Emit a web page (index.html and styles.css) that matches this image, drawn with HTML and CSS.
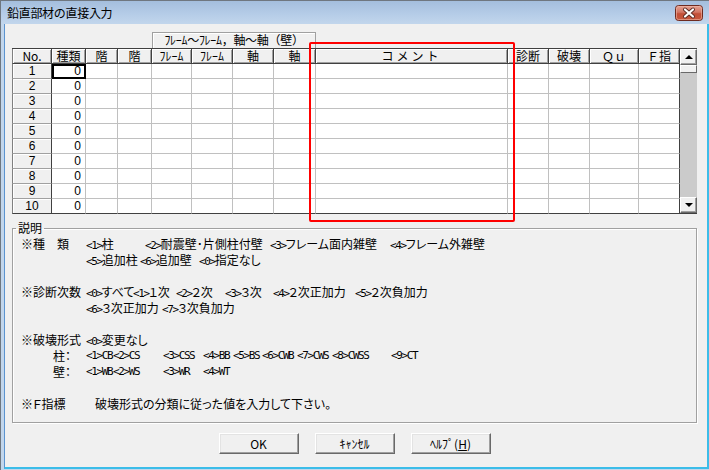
FILE: index.html
```html
<!DOCTYPE html>
<html lang="ja">
<head>
<meta charset="utf-8">
<title>鉛直部材の直接入力</title>
<link rel="stylesheet" href="styles.css">
</head>
<body>
<div class="window">
  <div class="titlebar">
    <span class="title">鉛直部材の直接入力</span>
    <span class="close">
      <svg width="28" height="16" viewBox="0 0 28 16">
        <defs>
          <linearGradient id="cg" x1="0" y1="0" x2="0" y2="1">
            <stop offset="0" stop-color="#e6a595"/>
            <stop offset="0.45" stop-color="#d27563"/>
            <stop offset="0.55" stop-color="#c24f37"/>
            <stop offset="1" stop-color="#c8583d"/>
          </linearGradient>
        </defs>
        <rect x="0.5" y="0.5" width="27" height="15" rx="3" fill="url(#cg)" stroke="#6e2b20"/>
        <rect x="1.5" y="1.5" width="25" height="13" rx="2" fill="none" stroke="#efb7a8" stroke-opacity="0.6"/>
        <path d="M10 4.5 L18 11.5 M18 4.5 L10 11.5" stroke="#5b2a22" stroke-width="4" stroke-linecap="round"/>
        <path d="M10 4.5 L18 11.5 M18 4.5 L10 11.5" stroke="#ffffff" stroke-width="2.2" stroke-linecap="round"/>
      </svg>
    </span>
  </div>
  <div class="client">
    <div class="grouphead-row"><div class="grouphead">ﾌﾚｰﾑ～ﾌﾚｰﾑ，軸～軸（壁）</div></div>
    <div class="gridwrap">
      <div class="grid">
        <div class="hc">No.</div><div class="hc">種類</div><div class="hc">階</div><div class="hc">階</div><div class="hc">ﾌﾚｰﾑ</div><div class="hc">ﾌﾚｰﾑ</div><div class="hc">軸</div><div class="hc">軸</div><div class="hc wide">コメント</div><div class="hc">診断</div><div class="hc">破壊</div><div class="hc">Ｑｕ</div><div class="hc">Ｆ指</div>
        <div class="rh">1</div><div class="dc num focus">0</div><div class="dc"></div><div class="dc"></div><div class="dc"></div><div class="dc"></div><div class="dc"></div><div class="dc"></div><div class="dc"></div><div class="dc"></div><div class="dc"></div><div class="dc"></div><div class="dc"></div>
        <div class="rh">2</div><div class="dc num">0</div><div class="dc"></div><div class="dc"></div><div class="dc"></div><div class="dc"></div><div class="dc"></div><div class="dc"></div><div class="dc"></div><div class="dc"></div><div class="dc"></div><div class="dc"></div><div class="dc"></div>
        <div class="rh">3</div><div class="dc num">0</div><div class="dc"></div><div class="dc"></div><div class="dc"></div><div class="dc"></div><div class="dc"></div><div class="dc"></div><div class="dc"></div><div class="dc"></div><div class="dc"></div><div class="dc"></div><div class="dc"></div>
        <div class="rh">4</div><div class="dc num">0</div><div class="dc"></div><div class="dc"></div><div class="dc"></div><div class="dc"></div><div class="dc"></div><div class="dc"></div><div class="dc"></div><div class="dc"></div><div class="dc"></div><div class="dc"></div><div class="dc"></div>
        <div class="rh">5</div><div class="dc num">0</div><div class="dc"></div><div class="dc"></div><div class="dc"></div><div class="dc"></div><div class="dc"></div><div class="dc"></div><div class="dc"></div><div class="dc"></div><div class="dc"></div><div class="dc"></div><div class="dc"></div>
        <div class="rh">6</div><div class="dc num">0</div><div class="dc"></div><div class="dc"></div><div class="dc"></div><div class="dc"></div><div class="dc"></div><div class="dc"></div><div class="dc"></div><div class="dc"></div><div class="dc"></div><div class="dc"></div><div class="dc"></div>
        <div class="rh">7</div><div class="dc num">0</div><div class="dc"></div><div class="dc"></div><div class="dc"></div><div class="dc"></div><div class="dc"></div><div class="dc"></div><div class="dc"></div><div class="dc"></div><div class="dc"></div><div class="dc"></div><div class="dc"></div>
        <div class="rh">8</div><div class="dc num">0</div><div class="dc"></div><div class="dc"></div><div class="dc"></div><div class="dc"></div><div class="dc"></div><div class="dc"></div><div class="dc"></div><div class="dc"></div><div class="dc"></div><div class="dc"></div><div class="dc"></div>
        <div class="rh">9</div><div class="dc num">0</div><div class="dc"></div><div class="dc"></div><div class="dc"></div><div class="dc"></div><div class="dc"></div><div class="dc"></div><div class="dc"></div><div class="dc"></div><div class="dc"></div><div class="dc"></div><div class="dc"></div>
        <div class="rh">10</div><div class="dc num">0</div><div class="dc"></div><div class="dc"></div><div class="dc"></div><div class="dc"></div><div class="dc"></div><div class="dc"></div><div class="dc"></div><div class="dc"></div><div class="dc"></div><div class="dc"></div><div class="dc"></div>
      </div>
      <div class="sb">
        <div class="sbtn up"></div>
        <div class="thumb"></div>
        <div class="track"></div>
        <div class="sbtn down"></div>
      </div>
    </div>
    <fieldset class="desc">
      <legend>説明</legend>
      <div class="ln r1"><span>※種　類</span><span><span class="k">&lt;1&gt;</span>柱</span><span><span class="k">&lt;2&gt;</span>耐震壁･片側柱付壁</span><span><span class="k">&lt;3&gt;</span>フレーム面内雑壁</span><span><span class="k">&lt;4&gt;</span>フレーム外雑壁</span></div>
      <div class="ln r2"><span><span class="k">&lt;5&gt;</span>追加柱</span><span><span class="k">&lt;6&gt;</span>追加壁</span><span><span class="k">&lt;0&gt;</span>指定なし</span></div>
      <div class="ln"></div>
      <div class="ln r3"><span>※診断次数</span><span><span class="k">&lt;0&gt;</span>すべて</span><span><span class="k">&lt;1&gt;</span>１次</span><span><span class="k">&lt;2&gt;</span>２次</span><span><span class="k">&lt;3&gt;</span>３次</span><span><span class="k">&lt;4&gt;</span>２次正加力</span><span><span class="k">&lt;5&gt;</span>２次負加力</span></div>
      <div class="ln r4"><span><span class="k">&lt;6&gt;</span>３次正加力</span><span><span class="k">&lt;7&gt;</span>３次負加力</span></div>
      <div class="ln"></div>
      <div class="ln r5"><span>※破壊形式</span><span><span class="k">&lt;0&gt;</span>変更なし</span></div>
      <div class="ln r6"><span class="sub">柱：</span><span class="k">&lt;1&gt;CB</span><span class="k">&lt;2&gt;CS</span><span class="k">&lt;3&gt;CSS</span><span class="k">&lt;4&gt;BB</span><span class="k">&lt;5&gt;BS</span><span class="k">&lt;6&gt;CWB</span><span class="k">&lt;7&gt;CWS</span><span class="k">&lt;8&gt;CWSS</span><span class="k">&lt;9&gt;CT</span></div>
      <div class="ln r7"><span class="sub">壁：</span><span class="k">&lt;1&gt;WB</span><span class="k">&lt;2&gt;WS</span><span class="k">&lt;3&gt;WR</span><span class="k">&lt;4&gt;WT</span></div>
      <div class="ln"></div>
      <div class="ln r8"><span>※Ｆ指標</span><span>破壊形式の分類に従った値を入力して下さい。</span></div>
    </fieldset>
    <div class="buttons">
      <button class="btn">OK</button>
      <button class="btn">ｷｬﾝｾﾙ</button>
      <button class="btn">ﾍﾙﾌﾟ(<u>H</u>)</button>
    </div>
  </div>
  <div class="annot"></div>
</div>
</body>
</html>
```

FILE: styles.css
```css
* { box-sizing: border-box; }
html, body { margin: 0; padding: 0; }
body {
  width: 709px;
  height: 470px;
  overflow: hidden;
  background: #fff;
  font-family: "Noto Sans CJK JP", "Noto Sans", sans-serif;
  font-size: 12px;
  color: #000;
}
.window {
  position: relative;
  width: 709px;
  height: 470px;
  display: flex;
  flex-direction: column;
  background: #c2d6ec;
  border-top: 1px solid #6f7780;
  border-left: 1px solid #6f7780;
}
.titlebar {
  height: 23px;
  flex: none;
  display: flex;
  align-items: center;
  justify-content: space-between;
  padding: 0 6px 0 6px;
  background: linear-gradient(#a4bedd, #b6cde8 60%, #c2d6ec);
}
.title {
  font-size: 12px;
  line-height: 14px;
  letter-spacing: -0.3px;
}
.close {
  display: flex;
  width: 28px;
  height: 16px;
}
.client {
  flex: 1;
  margin: 0 0 1px 3px;
  background: #f0f0f0;
  border-left: 1px solid #5b93cf;
  border-right: 2px solid #3cbde9;
  border-bottom: 2px solid #3cbde9;
  padding: 8px 10px 0 7px;
}
.grouphead-row {
  height: 16px;
  padding-left: 140px;
}
.grouphead {
  width: 164px;
  height: 16px;
  border: 1px solid #a0a0a0;
  border-bottom: none;
  box-shadow: inset 1px 1px #fff;
  text-align: center;
  line-height: 14px;
  font-size: 12px;
  letter-spacing: -0.3px;
  white-space: nowrap;
}
.gridwrap {
  display: flex;
  height: 166px;
}
.grid {
  display: grid;
  grid-template-columns: 40px 34px 32px 34px 40px 41px 41px 42px 192px 41px 41px 49px 41px;
  grid-template-rows: repeat(11, 15px);
  border-top: 1px solid #404040;
  width: 668px;
  height: 166px;
  background: #fff;
}
.hc {
  background: #f0f0f0;
  border-right: 1px solid #404040;
  border-bottom: 1px solid #404040;
  box-shadow: inset 1px 1px #fff, inset -1px -1px #a0a0a0;
  text-align: center;
  line-height: 14px;
  font-size: 12px;
  white-space: nowrap;
}
.hc:first-child { border-left: 1px solid #808080; }
.hc.wide { letter-spacing: 3px; }
.rh {
  background: #f0f0f0;
  border-left: 1px solid #808080;
  border-right: 1px solid #404040;
  border-bottom: 1px solid #a0a0a0;
  box-shadow: inset 1px 1px #fff;
  text-align: center;
  font-family: "Liberation Sans", Arial, sans-serif;
  line-height: 14px;
}
.dc {
  background: #fff;
  border-right: 1px solid #c0c0c0;
  border-bottom: 1px solid #c0c0c0;
  line-height: 14px;
}
.grid > :nth-child(13n) { border-right-color: #404040; }
.grid > :nth-last-child(-n+13) { border-bottom-color: #404040; }
.num {
  text-align: right;
  padding-right: 4px;
  font-family: "Liberation Sans", Arial, sans-serif;
}
.focus {
  outline: 2px solid #000;
  outline-offset: -2px;
}
.sb {
  width: 17px;
  height: 166px;
  display: flex;
  flex-direction: column;
  border-top: 1px solid #404040;
  border-bottom: 1px solid #404040;
}
.sbtn {
  height: 16px;
  flex: none;
  background: #f0f0f0;
  border: 1px solid;
  border-color: #fff #696969 #696969 #fff;
  box-shadow: inset -1px -1px #a0a0a0;
  display: flex;
  align-items: center;
  justify-content: center;
}
.sbtn.up::before {
  content: "";
  border-left: 4px solid transparent;
  border-right: 4px solid transparent;
  border-bottom: 4px solid #000;
}
.sbtn.down::before {
  content: "";
  border-left: 4px solid transparent;
  border-right: 4px solid transparent;
  border-top: 4px solid #000;
}
.thumb {
  height: 8px;
  flex: none;
  background: #f0f0f0;
  border: 1px solid;
  border-color: #fff #696969 #696969 #fff;
}
.track {
  flex: 1;
  background: #cbcbcb;
}
.desc {
  margin: 7px 0 0 0;
  padding: 1px 0 10px 8px;
  width: 685px;
  min-width: 0;
  border: 1px solid #a0a0a0;
  box-shadow: inset 1px 1px #fff, 1px 1px #fff;
  font-feature-settings: "palt";
}
.desc legend {
  padding: 0 2px;
  margin-left: -5px;
  line-height: 14px;
  font-size: 12px;
}
.ln {
  display: grid;
  height: 16px;
  line-height: 16px;
  white-space: nowrap;
}
.r1 { grid-template-columns: 65px 59px 125px 120px auto; }
.r2 { padding-left: 65px; grid-template-columns: 54px 59px auto; }
.r3 { grid-template-columns: 65px 47px 43px 49px 48px 82px auto; }
.r4 { padding-left: 65px; grid-template-columns: 76px auto; }
.r5 { grid-template-columns: 65px auto; }
.r6 { grid-template-columns: 65px 27px 50px 40px 30px 29px 35px 35px 59px auto; }
.r7 { grid-template-columns: 65px 27px 50px 40px auto; }
.r8 { grid-template-columns: 74px auto; }
.sub { padding-left: 32px; }
.k {
  font-family: "DejaVu Sans Mono", "Liberation Mono", monospace;
  font-size: 11px;
  letter-spacing: -1.4px;
  font-feature-settings: normal;
}
.buttons {
  display: flex;
  justify-content: center;
  gap: 16px;
  margin-top: 10px;
}
.btn {
  width: 80px;
  height: 21px;
  padding: 0;
  background: #f0f0f0;
  border: 1px solid;
  border-color: #fff #696969 #696969 #fff;
  box-shadow: inset -1px -1px #a0a0a0, inset 1px 1px #e3e3e3;
  font-family: "Noto Sans CJK JP", "Noto Sans", sans-serif;
  font-size: 12px;
  line-height: 17px;
  color: #000;
}
.annot {
  position: absolute;
  left: 308px;
  top: 41px;
  width: 206px;
  height: 180px;
  border: 2px solid #ff0000;
  border-radius: 2px;
  pointer-events: none;
}
```
